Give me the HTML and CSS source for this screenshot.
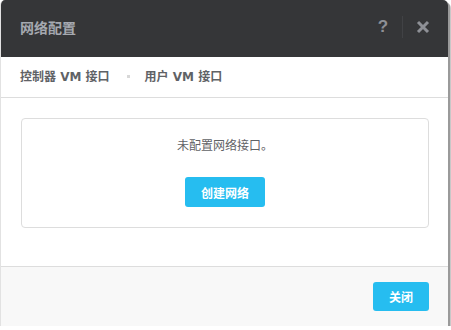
FILE: index.html
```html
<!DOCTYPE html>
<html lang="zh">
<head>
<meta charset="utf-8">
<link rel="stylesheet" href="styles.css">
</head>
<body>
<div class="dialog">
  <div class="header">
    <div class="title">网络配置</div>
    <div class="actions">
      <span class="help">?</span>
      <span class="sep"></span>
      <span class="close">
        <svg width="14" height="14" viewBox="0 0 14 14"><path d="M2 2 L12 12 M12 2 L2 12" stroke="#8e9096" stroke-width="3" stroke-linecap="butt"/></svg>
      </span>
    </div>
  </div>
  <div class="tabs">
    <span class="tab">控制器 VM 接口</span>
    <span class="dot"></span>
    <span class="tab">用户 VM 接口</span>
  </div>
  <div class="body">
    <div class="card">
      <div class="empty">未配置网络接口。</div>
      <button class="btn create">创建网络</button>
    </div>
  </div>
  <div class="footer">
    <button class="btn closebtn">关闭</button>
  </div>
</div>
</body>
</html>
```

FILE: styles.css
```css
html, body {
  margin: 0;
  padding: 0;
  background: #ffffff;
}
body {
  font-family: "Liberation Sans", "Noto Sans CJK SC", sans-serif;
}
.dialog {
  width: 447px;
  height: 326px;
  border-left: 1px solid #e2e2e2;
  border-radius: 5px 5px 0 0;
  box-shadow: 2px 2px 0 #9a9a9a, 3px 3px 0 #c8c8c8;
  display: flex;
  flex-direction: column;
  overflow: hidden;
  background: #fff;
}
.header {
  height: 57px;
  background: #353638;
  margin-left: -1px;
  display: flex;
  align-items: center;
  justify-content: space-between;
  padding: 0 18px 0 20px;
  flex-shrink: 0;
}
.title {
  color: #a5a9b0;
  font-size: 14px;
  font-weight: bold;
  margin-top: -4px;
}
.actions {
  display: flex;
  align-items: center;
  margin-top: -4px;
}
.help {
  color: #8e9096;
  font-size: 17px;
  font-weight: bold;
  width: 12px;
  text-align: center;
}
.sep {
  width: 1px;
  height: 22px;
  background: #414245;
  margin: 0 13px 0 13px;
}
.close {
  display: flex;
  align-items: center;
}
.tabs {
  height: 40px;
  border-bottom: 1px solid #dddddd;
  display: flex;
  align-items: center;
  padding-left: 19px;
  flex-shrink: 0;
}
.tab {
  font-family: "DejaVu Sans", "Noto Sans CJK SC", sans-serif;
  font-size: 12px;
  font-weight: bold;
  color: #5f6266;
  margin-top: -3px;
}
.dot {
  width: 3px;
  height: 3px;
  background: #d8d8d8;
  margin: 0 15px 0 17px;
  margin-top: -1px;
}
.body {
  flex: 1;
  padding: 20px 19px 0 20px;
}
.card {
  border: 1px solid #dddddd;
  border-radius: 4px;
  height: 108px;
  display: flex;
  flex-direction: column;
  align-items: center;
  box-sizing: content-box;
}
.empty {
  font-size: 12px;
  color: #5f6266;
  margin-top: 18px;
  line-height: 18px;
}
.btn {
  border: none;
  background: #26bdf0;
  color: #ffffff;
  font-family: "Liberation Sans", "Noto Sans CJK SC", sans-serif;
  font-weight: bold;
  font-size: 12px;
  border-radius: 3px;
  padding: 0;
}
.create {
  width: 80px;
  height: 30px;
  margin-top: 22px;
}
.footer {
  height: 59px;
  border-top: 1px solid #dddddd;
  background: #f8f8f8;
  display: flex;
  justify-content: flex-end;
  align-items: flex-start;
  padding-right: 19px;
  flex-shrink: 0;
}
.closebtn {
  width: 56px;
  height: 29px;
  margin-top: 15px;
}
```
